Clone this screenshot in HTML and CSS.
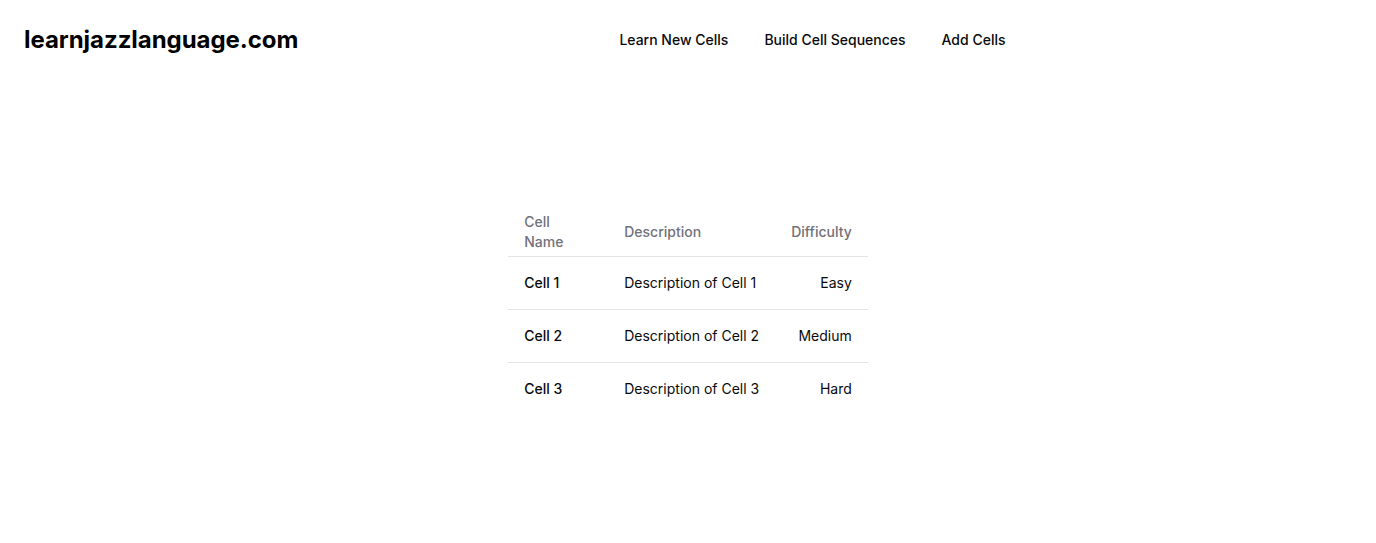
FILE: index.html
```html
<!DOCTYPE html>
<html lang="en">
<head>
<meta charset="utf-8">
<title>learnjazzlanguage.com</title>
<link rel="stylesheet" href="styles.css">
</head>
<body>
<header class="site-header">
  <div class="logo">learnjazzlanguage.com</div>
  <nav class="nav">
    <a href="#">Learn New Cells</a>
    <a href="#">Build Cell Sequences</a>
    <a href="#">Add Cells</a>
  </nav>
</header>
<main class="main">
  <table class="cells">
    <thead>
      <tr>
        <th class="col-name">Cell Name</th>
        <th>Description</th>
        <th class="right">Difficulty</th>
      </tr>
    </thead>
    <tbody>
      <tr>
        <td class="name">Cell 1</td>
        <td>Description of Cell 1</td>
        <td class="right">Easy</td>
      </tr>
      <tr>
        <td class="name">Cell 2</td>
        <td>Description of Cell 2</td>
        <td class="right">Medium</td>
      </tr>
      <tr>
        <td class="name">Cell 3</td>
        <td>Description of Cell 3</td>
        <td class="right">Hard</td>
      </tr>
    </tbody>
  </table>
</main>
</body>
</html>
```
FILE: styles.css
```css
* { box-sizing: border-box; }
html, body { margin: 0; padding: 0; background: #ffffff; }
body {
  font-family: Inter, "Liberation Sans", sans-serif;
  color: #09090b;
}
.site-header {
  display: flex;
  align-items: center;
  height: 80px;
  padding: 0 24px;
}
.logo {
  font-size: 24px;
  font-weight: 700;
  line-height: 32px;
  letter-spacing: -0.05px;
  color: #000;
}
.nav {
  display: flex;
  gap: 36px;
  margin-left: 321px;
}
.nav a {
  font-size: 14px;
  font-weight: 500;
  color: #09090b;
  text-decoration: none;
  line-height: 20px;
}
.main {
  display: flex;
  justify-content: center;
  padding-top: 128px;
}
.cells {
  border-collapse: collapse;
  font-size: 14px;
  line-height: 20px;
}
.cells th {
  height: 48px;
  padding: 0 16px;
  text-align: left;
  vertical-align: middle;
  font-weight: 500;
  color: #71717a;
  border-bottom: 1px solid #e4e4e7;
}
.cells th.col-name { width: 100px; }
.cells td {
  padding: 16px;
  vertical-align: middle;
  border-bottom: 1px solid #e4e4e7;
}
.cells tbody tr:last-child td { border-bottom: 0; }
.cells td.name { font-weight: 500; }
.cells .right { text-align: right; }
```
